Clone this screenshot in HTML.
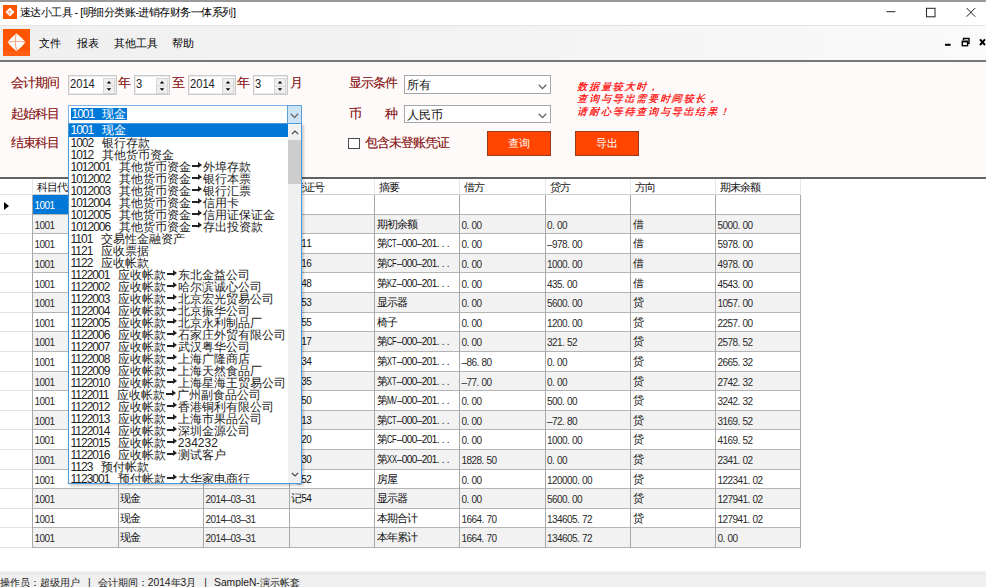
<!DOCTYPE html>
<html><head><meta charset="utf-8">
<style>
*{margin:0;padding:0;box-sizing:border-box}
html,body{width:986px;height:587px;overflow:hidden;background:#fff;font-family:"Liberation Sans",sans-serif;position:relative}
.abs{position:absolute}
#topline{position:absolute;left:0;top:0;width:986px;height:2px;background:#9a9a9a}
#title{position:absolute;left:0;top:2px;width:986px;height:23px;background:#fff}
#title .t{position:absolute;left:19.5px;top:3px;font-size:11px;letter-spacing:-0.5px;color:#000;white-space:nowrap}
#menubar{position:absolute;left:0;top:25px;width:986px;height:35px;background:linear-gradient(to right,#f0f0f0 0%,#f3f3f3 50%,#fafafa 100%);border-top:1px solid #e4e4e4}
.m{position:absolute;top:36px;font-size:11px;color:#000;white-space:nowrap}
#line1{position:absolute;left:0;top:59.6px;width:986px;height:2px;background:#777777}
#form{position:absolute;left:0;top:62px;width:986px;height:114.5px;background:#fefaf9}
#line2{position:absolute;left:0;top:177px;width:986px;height:2px;background:#626262}
.lab{position:absolute;font-size:13px;color:#8e2424;white-space:nowrap;line-height:15px;letter-spacing:-1px;text-shadow:0.2px 0 0 rgba(142,36,36,.6)}
.spin{position:absolute;height:20px;background:#fff;border:1px solid #c9c9c9;box-shadow:inset 0 0 0 1px #ececec}
.spin .v{position:absolute;left:0.5px;top:1px;font-size:12px;line-height:15px;color:#222;transform:scaleX(0.93);transform-origin:0 0}
.spin .sb{position:absolute;right:1px;top:1.5px}
.combo{position:absolute;background:#fff;border:1px solid #a6a6a6}
.combo .v{position:absolute;left:1.5px;top:2px;font-size:12px;line-height:14px;color:#111;white-space:pre}
.chev{position:absolute;right:3px}
.btn{position:absolute;background:#ff4500;border:1px solid #9a3a1c;color:#fff;font-size:11px;text-align:center}
#grid{position:absolute;left:0;top:179px;width:986px;height:394px;background:#fff}
.hc{position:absolute;top:179px;height:15px;font-size:11px;line-height:17px;padding-left:3.5px;letter-spacing:-1px;color:#111;white-space:nowrap;overflow:hidden}
.vl{position:absolute;width:1px;background:#a8a8a8}
.row{position:absolute;width:768px}
.hl{position:absolute;left:0;width:801px;height:1px;background:#b4b4b4}
.c{position:absolute;font-size:11px;padding-left:1.5px;color:#111;white-space:nowrap;overflow:hidden;letter-spacing:-0.8px}
.num{font-size:10px;letter-spacing:0;padding-left:1.5px;color:#2a2a2a}
.lat{font-size:10px;letter-spacing:0}
.c i{font-style:normal;display:inline-block;width:5px;text-align:left}
.c i.w{transform:scaleX(0.75);transform-origin:0 0}
.arrow{position:absolute;left:4px;width:0;height:0;border-left:5px solid #000;border-top:4px solid transparent;border-bottom:4px solid transparent}
#status{position:absolute;left:0;top:571px;width:986px;height:16px;background:linear-gradient(#f6f6f6 0,#e8e8e8 2.5px,#efefef 4px,#f0f0f0 100%)}
#status .t{position:absolute;left:0;top:5px;font-size:10.3px;color:#000;white-space:pre;color:#1a1a1a}
#status .sep{display:inline-block;margin:0 7px 0 8px}
#list{position:absolute;left:68px;top:123px;width:234px;height:361px;background:#fff;border:1px solid #4a98dc;box-shadow:2px 2px 2px rgba(0,0,0,.18);overflow:hidden}
#list .it{height:12px;line-height:12px;font-size:12px;padding-left:1.5px;white-space:pre;color:#222;width:219px;position:relative}
#list .sel{background:#0078d7;color:#fff;height:13px;line-height:13px}
#list .code{display:inline-block;letter-spacing:-1px}
#list .nm{margin-left:8.5px}
.ar{display:inline-block;width:12px;height:9px;vertical-align:0px;position:relative}
.ar:before{content:"";position:absolute;left:1px;top:2.5px;width:7px;height:2px;background:currentColor}
.ar:after{content:"";position:absolute;left:7px;top:0.3px;width:0;height:0;border-left:4.5px solid currentColor;border-top:3.2px solid transparent;border-bottom:3.2px solid transparent}
#sbar{position:absolute;left:218.5px;top:1px;width:14px;height:358px;background:#f0f0f0}
#thumb{position:absolute;left:0.5px;top:15px;width:13px;height:44px;background:#cdcdcd}
.sbchev{position:absolute;left:3px}
.red{position:absolute;left:576px;font-size:10px;line-height:12px;color:#ff1a1a;font-weight:normal;text-shadow:0.4px 0 0 #ff1a1a;white-space:nowrap;transform:skewX(-18deg);transform-origin:0 100%;letter-spacing:1.8px}
</style></head><body>
<div id="topline"></div>
<div id="title">
 <div class="t">速达小工具 - [明细分类账-进销存财务一体系列]</div>
</div>
<svg width="14" height="14" viewBox="0 0 14 14" style="position:absolute;left:3px;top:5px">
<rect width="14" height="14" fill="#ff5500"/>
<path d="M7 2.5 L11.5 7 L7 11.5 L2.5 7Z" fill="#fff"/>
<path d="M5 6.8 L8.5 6.2 M6.5 6.5 L6.8 10" fill="none" stroke="#f7a27a" stroke-width="1"/>
</svg>
<svg class="abs" style="left:880px;top:2px" width="106" height="23" viewBox="0 0 106 23">
 <path d="M6.5 9.7 H15.3" stroke="#222" stroke-width="1"/>
 <rect x="46.5" y="6.3" width="8.5" height="8.5" fill="none" stroke="#222" stroke-width="1"/>
 <path d="M86.6 6 L95.2 14.7 M95.2 6 L86.6 14.7" stroke="#222" stroke-width="1"/>
</svg>
<div id="menubar"></div>
<svg width="27" height="27" viewBox="0 0 27 27" style="position:absolute;left:3px;top:29px">
<rect width="27" height="27" fill="#ff5500"/>
<rect y="22" width="27" height="5" fill="#ff5e14"/>
<path d="M13.5 4.2 Q18.6 8.4 22.5 13.2 Q18.6 18 13.5 22.3 Q8.4 18 4.5 13.2 Q8.4 8.4 13.5 4.2Z" fill="#fff"/>
<path d="M5.2 13.3 Q13.5 11.4 21.8 13.1" fill="none" stroke="#f7a57c" stroke-width="1.1"/>
<path d="M13.2 4.8 Q10.9 13.4 13.9 21.6" fill="none" stroke="#f7a57c" stroke-width="1.1"/>
</svg>
<div class="m" style="left:39px">文件</div>
<div class="m" style="left:77px">报表</div>
<div class="m" style="left:114px">其他工具</div>
<div class="m" style="left:172px">帮助</div>
<svg class="abs" style="left:940px;top:34px" width="46" height="16" viewBox="0 0 46 16">
 <rect x="5" y="9.8" width="5.6" height="2" fill="#000"/>
 <path d="M23.5 6.2 V4.5 H29 V9.2 H27.6" fill="none" stroke="#000" stroke-width="1.4"/>
 <rect x="22.3" y="7.3" width="5.3" height="4.4" fill="none" stroke="#000" stroke-width="1.4"/>
 <rect x="22.3" y="6.8" width="5.3" height="1.6" fill="#000"/>
 <path d="M40 5.3 L45 11 M45 5.3 L40 11" stroke="#000" stroke-width="1.9"/>
</svg>
<div id="line1"></div>
<div id="form"></div>
<div class="lab" style="left:11px;top:75px">会计期间</div>
<div class="spin" style="left:68px;top:75px;width:49px"><div class="v">2014</div><svg class="sb" width="12" height="16" viewBox="0 0 12 16"><rect x="0" y="0" width="12" height="16" fill="#d6d6d6"/><rect x="1" y="1" width="10" height="6.5" fill="#efefef"/><rect x="1" y="8.5" width="10" height="6.5" fill="#efefef"/><path d="M3.8 5.6 L6 3 L8.2 5.6Z" fill="#000"/><path d="M3.8 10.2 L6 12.8 L8.2 10.2Z" fill="#000"/></svg></div>
<div class="lab" style="left:118px;top:75px">年</div>
<div class="spin" style="left:134px;top:75px;width:36px"><div class="v">3</div><svg class="sb" width="12" height="16" viewBox="0 0 12 16"><rect x="0" y="0" width="12" height="16" fill="#d6d6d6"/><rect x="1" y="1" width="10" height="6.5" fill="#efefef"/><rect x="1" y="8.5" width="10" height="6.5" fill="#efefef"/><path d="M3.8 5.6 L6 3 L8.2 5.6Z" fill="#000"/><path d="M3.8 10.2 L6 12.8 L8.2 10.2Z" fill="#000"/></svg></div>
<div class="lab" style="left:172px;top:75px">至</div>
<div class="spin" style="left:188px;top:75px;width:48px"><div class="v">2014</div><svg class="sb" width="12" height="16" viewBox="0 0 12 16"><rect x="0" y="0" width="12" height="16" fill="#d6d6d6"/><rect x="1" y="1" width="10" height="6.5" fill="#efefef"/><rect x="1" y="8.5" width="10" height="6.5" fill="#efefef"/><path d="M3.8 5.6 L6 3 L8.2 5.6Z" fill="#000"/><path d="M3.8 10.2 L6 12.8 L8.2 10.2Z" fill="#000"/></svg></div>
<div class="lab" style="left:237px;top:75px">年</div>
<div class="spin" style="left:253px;top:75px;width:35px"><div class="v">3</div><svg class="sb" width="12" height="16" viewBox="0 0 12 16"><rect x="0" y="0" width="12" height="16" fill="#d6d6d6"/><rect x="1" y="1" width="10" height="6.5" fill="#efefef"/><rect x="1" y="8.5" width="10" height="6.5" fill="#efefef"/><path d="M3.8 5.6 L6 3 L8.2 5.6Z" fill="#000"/><path d="M3.8 10.2 L6 12.8 L8.2 10.2Z" fill="#000"/></svg></div>
<div class="lab" style="left:290px;top:75px">月</div>
<div class="lab" style="left:11px;top:106px">起始科目</div>
<div class="lab" style="left:11px;top:134.5px">结束科目</div>
<div class="combo" style="left:68px;top:105px;width:234px;height:19px;border-color:#7db3e8"><div class="v" style="background:#0078d7;color:#fff;left:2px;top:2.3px;height:12px;line-height:12px;padding:0 1px 0 0.5px"><span style="letter-spacing:-1px">1001</span><span style="margin-left:7.5px">现金</span></div>
 <div class="abs" style="left:218px;top:-1px;width:15px;height:19px;background:#cce4f7;border:1px solid #5b9fd8"></div>
 <svg class="abs" style="left:220.5px;top:7px" width="9" height="6" viewBox="0 0 9 6"><path d="M0.8 0.8 L4.5 4.5 L8.2 0.8" fill="none" stroke="#6a6a6a" stroke-width="1.3"/></svg>
</div>
<div class="lab" style="left:349px;top:75px">显示条件</div>
<div class="combo" style="left:404px;top:74.5px;width:147px;height:19px"><div class="v">所有</div><svg class="chev" style="top:8px" width="9" height="6" viewBox="0 0 9 6"><path d="M0.8 0.8 L4.5 4.6 L8.2 0.8" fill="none" stroke="#606060" stroke-width="1.3"/></svg></div>
<div class="lab" style="left:349px;top:106px">币</div>
<div class="lab" style="left:385px;top:106px">种</div>
<div class="combo" style="left:404px;top:105px;width:147px;height:18px"><div class="v">人民币</div><svg class="chev" style="top:7px" width="9" height="6" viewBox="0 0 9 6"><path d="M0.8 0.8 L4.5 4.6 L8.2 0.8" fill="none" stroke="#606060" stroke-width="1.3"/></svg></div>
<div class="abs" style="left:348px;top:138px;width:11.5px;height:11px;border:1px solid #4a4a4a;background:#fff"></div>
<div class="lab" style="left:365px;top:135px">包含未登账凭证</div>
<div class="btn" style="left:487px;top:131px;width:63.5px;height:24.5px;line-height:22px">查询</div>
<div class="btn" style="left:575px;top:131px;width:63.5px;height:24.5px;line-height:22px">导出</div>
<div class="red" style="top:80.5px">数据量较大时，</div>
<div class="red" style="top:93px">查询与导出需要时间较长，</div>
<div class="red" style="top:105.5px">请耐心等待查询与导出结果！</div>
<div id="line2"></div>
<div id="grid"></div>
<div class="hc" style="left:33.5px;width:84.5px">科目代码</div>
<div class="hc" style="left:119.0px;width:84.5px">科目名称</div>
<div class="hc" style="left:204.5px;width:84.5px">日期</div>
<div class="hc" style="left:290.0px;width:84.5px">凭证号</div>
<div class="hc" style="left:375.5px;width:84.0px">摘要</div>
<div class="hc" style="left:460.5px;width:84.5px">借方</div>
<div class="hc" style="left:546.0px;width:84.5px">贷方</div>
<div class="hc" style="left:631.5px;width:84.0px">方向</div>
<div class="hc" style="left:716.5px;width:84.0px">期末余额</div>
<div class="row" style="left:32.5px;top:194.60px;height:19.61px;background:#ffffff"></div>
<div class="row" style="left:32.5px;top:214.21px;height:19.61px;background:#f2f2f2"></div>
<div class="row" style="left:32.5px;top:233.82px;height:19.61px;background:#ffffff"></div>
<div class="row" style="left:32.5px;top:253.43px;height:19.61px;background:#f2f2f2"></div>
<div class="row" style="left:32.5px;top:273.04px;height:19.61px;background:#ffffff"></div>
<div class="row" style="left:32.5px;top:292.66px;height:19.61px;background:#f2f2f2"></div>
<div class="row" style="left:32.5px;top:312.27px;height:19.61px;background:#ffffff"></div>
<div class="row" style="left:32.5px;top:331.88px;height:19.61px;background:#f2f2f2"></div>
<div class="row" style="left:32.5px;top:351.49px;height:19.61px;background:#ffffff"></div>
<div class="row" style="left:32.5px;top:371.10px;height:19.61px;background:#f2f2f2"></div>
<div class="row" style="left:32.5px;top:390.71px;height:19.61px;background:#ffffff"></div>
<div class="row" style="left:32.5px;top:410.32px;height:19.61px;background:#f2f2f2"></div>
<div class="row" style="left:32.5px;top:429.93px;height:19.61px;background:#ffffff"></div>
<div class="row" style="left:32.5px;top:449.54px;height:19.61px;background:#f2f2f2"></div>
<div class="row" style="left:32.5px;top:469.16px;height:19.61px;background:#ffffff"></div>
<div class="row" style="left:32.5px;top:488.77px;height:19.61px;background:#f2f2f2"></div>
<div class="row" style="left:32.5px;top:508.38px;height:19.61px;background:#ffffff"></div>
<div class="row" style="left:32.5px;top:527.99px;height:19.61px;background:#f2f2f2"></div>
<div class="hl" style="top:194.00px;background:#cccccc"></div>
<div class="hl" style="top:194.00px;width:32px;background:#e2e2e2"></div>
<div class="hl" style="top:213.61px"></div>
<div class="hl" style="top:213.61px;width:32px;background:#e2e2e2"></div>
<div class="hl" style="top:233.22px"></div>
<div class="hl" style="top:233.22px;width:32px;background:#e2e2e2"></div>
<div class="hl" style="top:252.83px"></div>
<div class="hl" style="top:252.83px;width:32px;background:#e2e2e2"></div>
<div class="hl" style="top:272.44px"></div>
<div class="hl" style="top:272.44px;width:32px;background:#e2e2e2"></div>
<div class="hl" style="top:292.06px"></div>
<div class="hl" style="top:292.06px;width:32px;background:#e2e2e2"></div>
<div class="hl" style="top:311.67px"></div>
<div class="hl" style="top:311.67px;width:32px;background:#e2e2e2"></div>
<div class="hl" style="top:331.28px"></div>
<div class="hl" style="top:331.28px;width:32px;background:#e2e2e2"></div>
<div class="hl" style="top:350.89px"></div>
<div class="hl" style="top:350.89px;width:32px;background:#e2e2e2"></div>
<div class="hl" style="top:370.50px"></div>
<div class="hl" style="top:370.50px;width:32px;background:#e2e2e2"></div>
<div class="hl" style="top:390.11px"></div>
<div class="hl" style="top:390.11px;width:32px;background:#e2e2e2"></div>
<div class="hl" style="top:409.72px"></div>
<div class="hl" style="top:409.72px;width:32px;background:#e2e2e2"></div>
<div class="hl" style="top:429.33px"></div>
<div class="hl" style="top:429.33px;width:32px;background:#e2e2e2"></div>
<div class="hl" style="top:448.94px"></div>
<div class="hl" style="top:448.94px;width:32px;background:#e2e2e2"></div>
<div class="hl" style="top:468.56px"></div>
<div class="hl" style="top:468.56px;width:32px;background:#e2e2e2"></div>
<div class="hl" style="top:488.17px"></div>
<div class="hl" style="top:488.17px;width:32px;background:#e2e2e2"></div>
<div class="hl" style="top:507.78px"></div>
<div class="hl" style="top:507.78px;width:32px;background:#e2e2e2"></div>
<div class="hl" style="top:527.39px"></div>
<div class="hl" style="top:527.39px;width:32px;background:#e2e2e2"></div>
<div class="hl" style="top:547.00px"></div>
<div class="hl" style="top:547.00px;width:32px;background:#e2e2e2"></div>
<div class="vl" style="left:32.0px;top:194.6px;height:353.0px"></div>
<div class="vl" style="left:32.0px;top:179px;height:15.6px;background:#e6e6e6"></div>
<div class="vl" style="left:117.5px;top:194.6px;height:353.0px"></div>
<div class="vl" style="left:117.5px;top:179px;height:15.6px;background:#e6e6e6"></div>
<div class="vl" style="left:203.0px;top:194.6px;height:353.0px"></div>
<div class="vl" style="left:203.0px;top:179px;height:15.6px;background:#e6e6e6"></div>
<div class="vl" style="left:288.5px;top:194.6px;height:353.0px"></div>
<div class="vl" style="left:288.5px;top:179px;height:15.6px;background:#e6e6e6"></div>
<div class="vl" style="left:374.0px;top:194.6px;height:353.0px"></div>
<div class="vl" style="left:374.0px;top:179px;height:15.6px;background:#e6e6e6"></div>
<div class="vl" style="left:459.0px;top:194.6px;height:353.0px"></div>
<div class="vl" style="left:459.0px;top:179px;height:15.6px;background:#e6e6e6"></div>
<div class="vl" style="left:544.5px;top:194.6px;height:353.0px"></div>
<div class="vl" style="left:544.5px;top:179px;height:15.6px;background:#e6e6e6"></div>
<div class="vl" style="left:630.0px;top:194.6px;height:353.0px"></div>
<div class="vl" style="left:630.0px;top:179px;height:15.6px;background:#e6e6e6"></div>
<div class="vl" style="left:715.0px;top:194.6px;height:353.0px"></div>
<div class="vl" style="left:715.0px;top:179px;height:15.6px;background:#e6e6e6"></div>
<div class="vl" style="left:800.0px;top:194.6px;height:353.0px"></div>
<div class="vl" style="left:800.0px;top:179px;height:15.6px;background:#e6e6e6"></div>
<div class="c num" style="left:33.0px;top:195.10px;width:84.5px;height:18.61px;line-height:21.11px;background:#0078d7;color:#fff;"><i>1</i><i>0</i><i>0</i><i>1</i></div>
<div class="c num" style="left:33.0px;top:214.71px;width:84.5px;height:18.61px;line-height:21.11px;"><i>1</i><i>0</i><i>0</i><i>1</i></div>
<div class="c" style="left:118.5px;top:214.71px;width:84.5px;height:18.61px;line-height:19.91px;">现金</div>
<div class="c num" style="left:204.0px;top:214.71px;width:84.5px;height:18.61px;line-height:21.11px;"><i>2</i><i>0</i><i>1</i><i>4</i><i>–</i><i>0</i><i>3</i><i>–</i><i>0</i><i>1</i></div>
<div class="c" style="left:375.0px;top:214.71px;width:84.0px;height:18.61px;line-height:19.91px;">期初余额</div>
<div class="c num" style="left:460.0px;top:214.71px;width:84.5px;height:18.61px;line-height:21.11px;"><i>0</i><i>.</i><i>0</i><i>0</i></div>
<div class="c num" style="left:545.5px;top:214.71px;width:84.5px;height:18.61px;line-height:21.11px;"><i>0</i><i>.</i><i>0</i><i>0</i></div>
<div class="c" style="left:631.0px;top:214.71px;width:84.0px;height:18.61px;line-height:19.91px;">借</div>
<div class="c num" style="left:716.0px;top:214.71px;width:84.0px;height:18.61px;line-height:21.11px;"><i>5</i><i>0</i><i>0</i><i>0</i><i>.</i><i>0</i><i>0</i></div>
<div class="c num" style="left:33.0px;top:234.32px;width:84.5px;height:18.61px;line-height:21.11px;"><i>1</i><i>0</i><i>0</i><i>1</i></div>
<div class="c" style="left:118.5px;top:234.32px;width:84.5px;height:18.61px;line-height:19.91px;">现金</div>
<div class="c num" style="left:204.0px;top:234.32px;width:84.5px;height:18.61px;line-height:21.11px;"><i>2</i><i>0</i><i>1</i><i>4</i><i>–</i><i>0</i><i>3</i><i>–</i><i>0</i><i>1</i></div>
<div class="c" style="left:289.5px;top:234.32px;width:84.5px;height:18.61px;line-height:19.91px;">记<span class="lat"><i>1</i><i>1</i></span></div>
<div class="c" style="left:375.0px;top:234.32px;width:84.0px;height:18.61px;line-height:19.91px;">第<span class="lat"><i class="w">C</i><i class="w">T</i><i>–</i><i>0</i><i>0</i><i>0</i><i>–</i><i>2</i><i>0</i><i>1</i><i>.</i><i>.</i><i>.</i></span></div>
<div class="c num" style="left:460.0px;top:234.32px;width:84.5px;height:18.61px;line-height:21.11px;"><i>0</i><i>.</i><i>0</i><i>0</i></div>
<div class="c num" style="left:545.5px;top:234.32px;width:84.5px;height:18.61px;line-height:21.11px;"><i>–</i><i>9</i><i>7</i><i>8</i><i>.</i><i>0</i><i>0</i></div>
<div class="c" style="left:631.0px;top:234.32px;width:84.0px;height:18.61px;line-height:19.91px;">借</div>
<div class="c num" style="left:716.0px;top:234.32px;width:84.0px;height:18.61px;line-height:21.11px;"><i>5</i><i>9</i><i>7</i><i>8</i><i>.</i><i>0</i><i>0</i></div>
<div class="c num" style="left:33.0px;top:253.93px;width:84.5px;height:18.61px;line-height:21.11px;"><i>1</i><i>0</i><i>0</i><i>1</i></div>
<div class="c" style="left:118.5px;top:253.93px;width:84.5px;height:18.61px;line-height:19.91px;">现金</div>
<div class="c num" style="left:204.0px;top:253.93px;width:84.5px;height:18.61px;line-height:21.11px;"><i>2</i><i>0</i><i>1</i><i>4</i><i>–</i><i>0</i><i>3</i><i>–</i><i>0</i><i>1</i></div>
<div class="c" style="left:289.5px;top:253.93px;width:84.5px;height:18.61px;line-height:19.91px;">记<span class="lat"><i>1</i><i>6</i></span></div>
<div class="c" style="left:375.0px;top:253.93px;width:84.0px;height:18.61px;line-height:19.91px;">第<span class="lat"><i class="w">C</i><i class="w">F</i><i>–</i><i>0</i><i>0</i><i>0</i><i>–</i><i>2</i><i>0</i><i>1</i><i>.</i><i>.</i><i>.</i></span></div>
<div class="c num" style="left:460.0px;top:253.93px;width:84.5px;height:18.61px;line-height:21.11px;"><i>0</i><i>.</i><i>0</i><i>0</i></div>
<div class="c num" style="left:545.5px;top:253.93px;width:84.5px;height:18.61px;line-height:21.11px;"><i>1</i><i>0</i><i>0</i><i>0</i><i>.</i><i>0</i><i>0</i></div>
<div class="c" style="left:631.0px;top:253.93px;width:84.0px;height:18.61px;line-height:19.91px;">借</div>
<div class="c num" style="left:716.0px;top:253.93px;width:84.0px;height:18.61px;line-height:21.11px;"><i>4</i><i>9</i><i>7</i><i>8</i><i>.</i><i>0</i><i>0</i></div>
<div class="c num" style="left:33.0px;top:273.54px;width:84.5px;height:18.61px;line-height:21.11px;"><i>1</i><i>0</i><i>0</i><i>1</i></div>
<div class="c" style="left:118.5px;top:273.54px;width:84.5px;height:18.61px;line-height:19.91px;">现金</div>
<div class="c num" style="left:204.0px;top:273.54px;width:84.5px;height:18.61px;line-height:21.11px;"><i>2</i><i>0</i><i>1</i><i>4</i><i>–</i><i>0</i><i>3</i><i>–</i><i>0</i><i>1</i></div>
<div class="c" style="left:289.5px;top:273.54px;width:84.5px;height:18.61px;line-height:19.91px;">记<span class="lat"><i>4</i><i>8</i></span></div>
<div class="c" style="left:375.0px;top:273.54px;width:84.0px;height:18.61px;line-height:19.91px;">第<span class="lat"><i class="w">K</i><i class="w">Z</i><i>–</i><i>0</i><i>0</i><i>0</i><i>–</i><i>2</i><i>0</i><i>1</i><i>.</i><i>.</i><i>.</i></span></div>
<div class="c num" style="left:460.0px;top:273.54px;width:84.5px;height:18.61px;line-height:21.11px;"><i>0</i><i>.</i><i>0</i><i>0</i></div>
<div class="c num" style="left:545.5px;top:273.54px;width:84.5px;height:18.61px;line-height:21.11px;"><i>4</i><i>3</i><i>5</i><i>.</i><i>0</i><i>0</i></div>
<div class="c" style="left:631.0px;top:273.54px;width:84.0px;height:18.61px;line-height:19.91px;">借</div>
<div class="c num" style="left:716.0px;top:273.54px;width:84.0px;height:18.61px;line-height:21.11px;"><i>4</i><i>5</i><i>4</i><i>3</i><i>.</i><i>0</i><i>0</i></div>
<div class="c num" style="left:33.0px;top:293.16px;width:84.5px;height:18.61px;line-height:21.11px;"><i>1</i><i>0</i><i>0</i><i>1</i></div>
<div class="c" style="left:118.5px;top:293.16px;width:84.5px;height:18.61px;line-height:19.91px;">现金</div>
<div class="c num" style="left:204.0px;top:293.16px;width:84.5px;height:18.61px;line-height:21.11px;"><i>2</i><i>0</i><i>1</i><i>4</i><i>–</i><i>0</i><i>3</i><i>–</i><i>0</i><i>1</i></div>
<div class="c" style="left:289.5px;top:293.16px;width:84.5px;height:18.61px;line-height:19.91px;">记<span class="lat"><i>5</i><i>3</i></span></div>
<div class="c" style="left:375.0px;top:293.16px;width:84.0px;height:18.61px;line-height:19.91px;">显示器</div>
<div class="c num" style="left:460.0px;top:293.16px;width:84.5px;height:18.61px;line-height:21.11px;"><i>0</i><i>.</i><i>0</i><i>0</i></div>
<div class="c num" style="left:545.5px;top:293.16px;width:84.5px;height:18.61px;line-height:21.11px;"><i>5</i><i>6</i><i>0</i><i>0</i><i>.</i><i>0</i><i>0</i></div>
<div class="c" style="left:631.0px;top:293.16px;width:84.0px;height:18.61px;line-height:19.91px;">贷</div>
<div class="c num" style="left:716.0px;top:293.16px;width:84.0px;height:18.61px;line-height:21.11px;"><i>1</i><i>0</i><i>5</i><i>7</i><i>.</i><i>0</i><i>0</i></div>
<div class="c num" style="left:33.0px;top:312.77px;width:84.5px;height:18.61px;line-height:21.11px;"><i>1</i><i>0</i><i>0</i><i>1</i></div>
<div class="c" style="left:118.5px;top:312.77px;width:84.5px;height:18.61px;line-height:19.91px;">现金</div>
<div class="c num" style="left:204.0px;top:312.77px;width:84.5px;height:18.61px;line-height:21.11px;"><i>2</i><i>0</i><i>1</i><i>4</i><i>–</i><i>0</i><i>3</i><i>–</i><i>0</i><i>1</i></div>
<div class="c" style="left:289.5px;top:312.77px;width:84.5px;height:18.61px;line-height:19.91px;">记<span class="lat"><i>5</i><i>5</i></span></div>
<div class="c" style="left:375.0px;top:312.77px;width:84.0px;height:18.61px;line-height:19.91px;">椅子</div>
<div class="c num" style="left:460.0px;top:312.77px;width:84.5px;height:18.61px;line-height:21.11px;"><i>0</i><i>.</i><i>0</i><i>0</i></div>
<div class="c num" style="left:545.5px;top:312.77px;width:84.5px;height:18.61px;line-height:21.11px;"><i>1</i><i>2</i><i>0</i><i>0</i><i>.</i><i>0</i><i>0</i></div>
<div class="c" style="left:631.0px;top:312.77px;width:84.0px;height:18.61px;line-height:19.91px;">贷</div>
<div class="c num" style="left:716.0px;top:312.77px;width:84.0px;height:18.61px;line-height:21.11px;"><i>2</i><i>2</i><i>5</i><i>7</i><i>.</i><i>0</i><i>0</i></div>
<div class="c num" style="left:33.0px;top:332.38px;width:84.5px;height:18.61px;line-height:21.11px;"><i>1</i><i>0</i><i>0</i><i>1</i></div>
<div class="c" style="left:118.5px;top:332.38px;width:84.5px;height:18.61px;line-height:19.91px;">现金</div>
<div class="c num" style="left:204.0px;top:332.38px;width:84.5px;height:18.61px;line-height:21.11px;"><i>2</i><i>0</i><i>1</i><i>4</i><i>–</i><i>0</i><i>3</i><i>–</i><i>0</i><i>1</i></div>
<div class="c" style="left:289.5px;top:332.38px;width:84.5px;height:18.61px;line-height:19.91px;">记<span class="lat"><i>1</i><i>7</i></span></div>
<div class="c" style="left:375.0px;top:332.38px;width:84.0px;height:18.61px;line-height:19.91px;">第<span class="lat"><i class="w">C</i><i class="w">F</i><i>–</i><i>0</i><i>0</i><i>0</i><i>–</i><i>2</i><i>0</i><i>1</i><i>.</i><i>.</i><i>.</i></span></div>
<div class="c num" style="left:460.0px;top:332.38px;width:84.5px;height:18.61px;line-height:21.11px;"><i>0</i><i>.</i><i>0</i><i>0</i></div>
<div class="c num" style="left:545.5px;top:332.38px;width:84.5px;height:18.61px;line-height:21.11px;"><i>3</i><i>2</i><i>1</i><i>.</i><i>5</i><i>2</i></div>
<div class="c" style="left:631.0px;top:332.38px;width:84.0px;height:18.61px;line-height:19.91px;">贷</div>
<div class="c num" style="left:716.0px;top:332.38px;width:84.0px;height:18.61px;line-height:21.11px;"><i>2</i><i>5</i><i>7</i><i>8</i><i>.</i><i>5</i><i>2</i></div>
<div class="c num" style="left:33.0px;top:351.99px;width:84.5px;height:18.61px;line-height:21.11px;"><i>1</i><i>0</i><i>0</i><i>1</i></div>
<div class="c" style="left:118.5px;top:351.99px;width:84.5px;height:18.61px;line-height:19.91px;">现金</div>
<div class="c num" style="left:204.0px;top:351.99px;width:84.5px;height:18.61px;line-height:21.11px;"><i>2</i><i>0</i><i>1</i><i>4</i><i>–</i><i>0</i><i>3</i><i>–</i><i>0</i><i>1</i></div>
<div class="c" style="left:289.5px;top:351.99px;width:84.5px;height:18.61px;line-height:19.91px;">记<span class="lat"><i>3</i><i>4</i></span></div>
<div class="c" style="left:375.0px;top:351.99px;width:84.0px;height:18.61px;line-height:19.91px;">第<span class="lat"><i class="w">X</i><i class="w">T</i><i>–</i><i>0</i><i>0</i><i>0</i><i>–</i><i>2</i><i>0</i><i>1</i><i>.</i><i>.</i><i>.</i></span></div>
<div class="c num" style="left:460.0px;top:351.99px;width:84.5px;height:18.61px;line-height:21.11px;"><i>–</i><i>8</i><i>6</i><i>.</i><i>8</i><i>0</i></div>
<div class="c num" style="left:545.5px;top:351.99px;width:84.5px;height:18.61px;line-height:21.11px;"><i>0</i><i>.</i><i>0</i><i>0</i></div>
<div class="c" style="left:631.0px;top:351.99px;width:84.0px;height:18.61px;line-height:19.91px;">贷</div>
<div class="c num" style="left:716.0px;top:351.99px;width:84.0px;height:18.61px;line-height:21.11px;"><i>2</i><i>6</i><i>6</i><i>5</i><i>.</i><i>3</i><i>2</i></div>
<div class="c num" style="left:33.0px;top:371.60px;width:84.5px;height:18.61px;line-height:21.11px;"><i>1</i><i>0</i><i>0</i><i>1</i></div>
<div class="c" style="left:118.5px;top:371.60px;width:84.5px;height:18.61px;line-height:19.91px;">现金</div>
<div class="c num" style="left:204.0px;top:371.60px;width:84.5px;height:18.61px;line-height:21.11px;"><i>2</i><i>0</i><i>1</i><i>4</i><i>–</i><i>0</i><i>3</i><i>–</i><i>0</i><i>1</i></div>
<div class="c" style="left:289.5px;top:371.60px;width:84.5px;height:18.61px;line-height:19.91px;">记<span class="lat"><i>3</i><i>5</i></span></div>
<div class="c" style="left:375.0px;top:371.60px;width:84.0px;height:18.61px;line-height:19.91px;">第<span class="lat"><i class="w">X</i><i class="w">T</i><i>–</i><i>0</i><i>0</i><i>0</i><i>–</i><i>2</i><i>0</i><i>1</i><i>.</i><i>.</i><i>.</i></span></div>
<div class="c num" style="left:460.0px;top:371.60px;width:84.5px;height:18.61px;line-height:21.11px;"><i>–</i><i>7</i><i>7</i><i>.</i><i>0</i><i>0</i></div>
<div class="c num" style="left:545.5px;top:371.60px;width:84.5px;height:18.61px;line-height:21.11px;"><i>0</i><i>.</i><i>0</i><i>0</i></div>
<div class="c" style="left:631.0px;top:371.60px;width:84.0px;height:18.61px;line-height:19.91px;">贷</div>
<div class="c num" style="left:716.0px;top:371.60px;width:84.0px;height:18.61px;line-height:21.11px;"><i>2</i><i>7</i><i>4</i><i>2</i><i>.</i><i>3</i><i>2</i></div>
<div class="c num" style="left:33.0px;top:391.21px;width:84.5px;height:18.61px;line-height:21.11px;"><i>1</i><i>0</i><i>0</i><i>1</i></div>
<div class="c" style="left:118.5px;top:391.21px;width:84.5px;height:18.61px;line-height:19.91px;">现金</div>
<div class="c num" style="left:204.0px;top:391.21px;width:84.5px;height:18.61px;line-height:21.11px;"><i>2</i><i>0</i><i>1</i><i>4</i><i>–</i><i>0</i><i>3</i><i>–</i><i>0</i><i>1</i></div>
<div class="c" style="left:289.5px;top:391.21px;width:84.5px;height:18.61px;line-height:19.91px;">记<span class="lat"><i>5</i><i>0</i></span></div>
<div class="c" style="left:375.0px;top:391.21px;width:84.0px;height:18.61px;line-height:19.91px;">第<span class="lat"><i class="w">M</i><i class="w">V</i><i>–</i><i>0</i><i>0</i><i>0</i><i>–</i><i>2</i><i>0</i><i>1</i><i>.</i><i>.</i><i>.</i></span></div>
<div class="c num" style="left:460.0px;top:391.21px;width:84.5px;height:18.61px;line-height:21.11px;"><i>0</i><i>.</i><i>0</i><i>0</i></div>
<div class="c num" style="left:545.5px;top:391.21px;width:84.5px;height:18.61px;line-height:21.11px;"><i>5</i><i>0</i><i>0</i><i>.</i><i>0</i><i>0</i></div>
<div class="c" style="left:631.0px;top:391.21px;width:84.0px;height:18.61px;line-height:19.91px;">贷</div>
<div class="c num" style="left:716.0px;top:391.21px;width:84.0px;height:18.61px;line-height:21.11px;"><i>3</i><i>2</i><i>4</i><i>2</i><i>.</i><i>3</i><i>2</i></div>
<div class="c num" style="left:33.0px;top:410.82px;width:84.5px;height:18.61px;line-height:21.11px;"><i>1</i><i>0</i><i>0</i><i>1</i></div>
<div class="c" style="left:118.5px;top:410.82px;width:84.5px;height:18.61px;line-height:19.91px;">现金</div>
<div class="c num" style="left:204.0px;top:410.82px;width:84.5px;height:18.61px;line-height:21.11px;"><i>2</i><i>0</i><i>1</i><i>4</i><i>–</i><i>0</i><i>3</i><i>–</i><i>0</i><i>1</i></div>
<div class="c" style="left:289.5px;top:410.82px;width:84.5px;height:18.61px;line-height:19.91px;">记<span class="lat"><i>1</i><i>3</i></span></div>
<div class="c" style="left:375.0px;top:410.82px;width:84.0px;height:18.61px;line-height:19.91px;">第<span class="lat"><i class="w">C</i><i class="w">T</i><i>–</i><i>0</i><i>0</i><i>0</i><i>–</i><i>2</i><i>0</i><i>1</i><i>.</i><i>.</i><i>.</i></span></div>
<div class="c num" style="left:460.0px;top:410.82px;width:84.5px;height:18.61px;line-height:21.11px;"><i>0</i><i>.</i><i>0</i><i>0</i></div>
<div class="c num" style="left:545.5px;top:410.82px;width:84.5px;height:18.61px;line-height:21.11px;"><i>–</i><i>7</i><i>2</i><i>.</i><i>8</i><i>0</i></div>
<div class="c" style="left:631.0px;top:410.82px;width:84.0px;height:18.61px;line-height:19.91px;">贷</div>
<div class="c num" style="left:716.0px;top:410.82px;width:84.0px;height:18.61px;line-height:21.11px;"><i>3</i><i>1</i><i>6</i><i>9</i><i>.</i><i>5</i><i>2</i></div>
<div class="c num" style="left:33.0px;top:430.43px;width:84.5px;height:18.61px;line-height:21.11px;"><i>1</i><i>0</i><i>0</i><i>1</i></div>
<div class="c" style="left:118.5px;top:430.43px;width:84.5px;height:18.61px;line-height:19.91px;">现金</div>
<div class="c num" style="left:204.0px;top:430.43px;width:84.5px;height:18.61px;line-height:21.11px;"><i>2</i><i>0</i><i>1</i><i>4</i><i>–</i><i>0</i><i>3</i><i>–</i><i>0</i><i>1</i></div>
<div class="c" style="left:289.5px;top:430.43px;width:84.5px;height:18.61px;line-height:19.91px;">记<span class="lat"><i>2</i><i>0</i></span></div>
<div class="c" style="left:375.0px;top:430.43px;width:84.0px;height:18.61px;line-height:19.91px;">第<span class="lat"><i class="w">C</i><i class="w">F</i><i>–</i><i>0</i><i>0</i><i>0</i><i>–</i><i>2</i><i>0</i><i>1</i><i>.</i><i>.</i><i>.</i></span></div>
<div class="c num" style="left:460.0px;top:430.43px;width:84.5px;height:18.61px;line-height:21.11px;"><i>0</i><i>.</i><i>0</i><i>0</i></div>
<div class="c num" style="left:545.5px;top:430.43px;width:84.5px;height:18.61px;line-height:21.11px;"><i>1</i><i>0</i><i>0</i><i>0</i><i>.</i><i>0</i><i>0</i></div>
<div class="c" style="left:631.0px;top:430.43px;width:84.0px;height:18.61px;line-height:19.91px;">贷</div>
<div class="c num" style="left:716.0px;top:430.43px;width:84.0px;height:18.61px;line-height:21.11px;"><i>4</i><i>1</i><i>6</i><i>9</i><i>.</i><i>5</i><i>2</i></div>
<div class="c num" style="left:33.0px;top:450.04px;width:84.5px;height:18.61px;line-height:21.11px;"><i>1</i><i>0</i><i>0</i><i>1</i></div>
<div class="c" style="left:118.5px;top:450.04px;width:84.5px;height:18.61px;line-height:19.91px;">现金</div>
<div class="c num" style="left:204.0px;top:450.04px;width:84.5px;height:18.61px;line-height:21.11px;"><i>2</i><i>0</i><i>1</i><i>4</i><i>–</i><i>0</i><i>3</i><i>–</i><i>0</i><i>1</i></div>
<div class="c" style="left:289.5px;top:450.04px;width:84.5px;height:18.61px;line-height:19.91px;">记<span class="lat"><i>3</i><i>0</i></span></div>
<div class="c" style="left:375.0px;top:450.04px;width:84.0px;height:18.61px;line-height:19.91px;">第<span class="lat"><i class="w">X</i><i class="w">X</i><i>–</i><i>0</i><i>0</i><i>0</i><i>–</i><i>2</i><i>0</i><i>1</i><i>.</i><i>.</i><i>.</i></span></div>
<div class="c num" style="left:460.0px;top:450.04px;width:84.5px;height:18.61px;line-height:21.11px;"><i>1</i><i>8</i><i>2</i><i>8</i><i>.</i><i>5</i><i>0</i></div>
<div class="c num" style="left:545.5px;top:450.04px;width:84.5px;height:18.61px;line-height:21.11px;"><i>0</i><i>.</i><i>0</i><i>0</i></div>
<div class="c" style="left:631.0px;top:450.04px;width:84.0px;height:18.61px;line-height:19.91px;">贷</div>
<div class="c num" style="left:716.0px;top:450.04px;width:84.0px;height:18.61px;line-height:21.11px;"><i>2</i><i>3</i><i>4</i><i>1</i><i>.</i><i>0</i><i>2</i></div>
<div class="c num" style="left:33.0px;top:469.66px;width:84.5px;height:18.61px;line-height:21.11px;"><i>1</i><i>0</i><i>0</i><i>1</i></div>
<div class="c" style="left:118.5px;top:469.66px;width:84.5px;height:18.61px;line-height:19.91px;">现金</div>
<div class="c num" style="left:204.0px;top:469.66px;width:84.5px;height:18.61px;line-height:21.11px;"><i>2</i><i>0</i><i>1</i><i>4</i><i>–</i><i>0</i><i>3</i><i>–</i><i>0</i><i>1</i></div>
<div class="c" style="left:289.5px;top:469.66px;width:84.5px;height:18.61px;line-height:19.91px;">记<span class="lat"><i>5</i><i>2</i></span></div>
<div class="c" style="left:375.0px;top:469.66px;width:84.0px;height:18.61px;line-height:19.91px;">房屋</div>
<div class="c num" style="left:460.0px;top:469.66px;width:84.5px;height:18.61px;line-height:21.11px;"><i>0</i><i>.</i><i>0</i><i>0</i></div>
<div class="c num" style="left:545.5px;top:469.66px;width:84.5px;height:18.61px;line-height:21.11px;"><i>1</i><i>2</i><i>0</i><i>0</i><i>0</i><i>0</i><i>.</i><i>0</i><i>0</i></div>
<div class="c" style="left:631.0px;top:469.66px;width:84.0px;height:18.61px;line-height:19.91px;">贷</div>
<div class="c num" style="left:716.0px;top:469.66px;width:84.0px;height:18.61px;line-height:21.11px;"><i>1</i><i>2</i><i>2</i><i>3</i><i>4</i><i>1</i><i>.</i><i>0</i><i>2</i></div>
<div class="c num" style="left:33.0px;top:489.27px;width:84.5px;height:18.61px;line-height:21.11px;"><i>1</i><i>0</i><i>0</i><i>1</i></div>
<div class="c" style="left:118.5px;top:489.27px;width:84.5px;height:18.61px;line-height:19.91px;">现金</div>
<div class="c num" style="left:204.0px;top:489.27px;width:84.5px;height:18.61px;line-height:21.11px;"><i>2</i><i>0</i><i>1</i><i>4</i><i>–</i><i>0</i><i>3</i><i>–</i><i>3</i><i>1</i></div>
<div class="c" style="left:289.5px;top:489.27px;width:84.5px;height:18.61px;line-height:19.91px;">记<span class="lat"><i>5</i><i>4</i></span></div>
<div class="c" style="left:375.0px;top:489.27px;width:84.0px;height:18.61px;line-height:19.91px;">显示器</div>
<div class="c num" style="left:460.0px;top:489.27px;width:84.5px;height:18.61px;line-height:21.11px;"><i>0</i><i>.</i><i>0</i><i>0</i></div>
<div class="c num" style="left:545.5px;top:489.27px;width:84.5px;height:18.61px;line-height:21.11px;"><i>5</i><i>6</i><i>0</i><i>0</i><i>.</i><i>0</i><i>0</i></div>
<div class="c" style="left:631.0px;top:489.27px;width:84.0px;height:18.61px;line-height:19.91px;">贷</div>
<div class="c num" style="left:716.0px;top:489.27px;width:84.0px;height:18.61px;line-height:21.11px;"><i>1</i><i>2</i><i>7</i><i>9</i><i>4</i><i>1</i><i>.</i><i>0</i><i>2</i></div>
<div class="c num" style="left:33.0px;top:508.88px;width:84.5px;height:18.61px;line-height:21.11px;"><i>1</i><i>0</i><i>0</i><i>1</i></div>
<div class="c" style="left:118.5px;top:508.88px;width:84.5px;height:18.61px;line-height:19.91px;">现金</div>
<div class="c num" style="left:204.0px;top:508.88px;width:84.5px;height:18.61px;line-height:21.11px;"><i>2</i><i>0</i><i>1</i><i>4</i><i>–</i><i>0</i><i>3</i><i>–</i><i>3</i><i>1</i></div>
<div class="c" style="left:375.0px;top:508.88px;width:84.0px;height:18.61px;line-height:19.91px;">本期合计</div>
<div class="c num" style="left:460.0px;top:508.88px;width:84.5px;height:18.61px;line-height:21.11px;"><i>1</i><i>6</i><i>6</i><i>4</i><i>.</i><i>7</i><i>0</i></div>
<div class="c num" style="left:545.5px;top:508.88px;width:84.5px;height:18.61px;line-height:21.11px;"><i>1</i><i>3</i><i>4</i><i>6</i><i>0</i><i>5</i><i>.</i><i>7</i><i>2</i></div>
<div class="c" style="left:631.0px;top:508.88px;width:84.0px;height:18.61px;line-height:19.91px;">贷</div>
<div class="c num" style="left:716.0px;top:508.88px;width:84.0px;height:18.61px;line-height:21.11px;"><i>1</i><i>2</i><i>7</i><i>9</i><i>4</i><i>1</i><i>.</i><i>0</i><i>2</i></div>
<div class="c num" style="left:33.0px;top:528.49px;width:84.5px;height:18.61px;line-height:21.11px;"><i>1</i><i>0</i><i>0</i><i>1</i></div>
<div class="c" style="left:118.5px;top:528.49px;width:84.5px;height:18.61px;line-height:19.91px;">现金</div>
<div class="c num" style="left:204.0px;top:528.49px;width:84.5px;height:18.61px;line-height:21.11px;"><i>2</i><i>0</i><i>1</i><i>4</i><i>–</i><i>0</i><i>3</i><i>–</i><i>3</i><i>1</i></div>
<div class="c" style="left:375.0px;top:528.49px;width:84.0px;height:18.61px;line-height:19.91px;">本年累计</div>
<div class="c num" style="left:460.0px;top:528.49px;width:84.5px;height:18.61px;line-height:21.11px;"><i>1</i><i>6</i><i>6</i><i>4</i><i>.</i><i>7</i><i>0</i></div>
<div class="c num" style="left:545.5px;top:528.49px;width:84.5px;height:18.61px;line-height:21.11px;"><i>1</i><i>3</i><i>4</i><i>6</i><i>0</i><i>5</i><i>.</i><i>7</i><i>2</i></div>
<div class="c num" style="left:716.0px;top:528.49px;width:84.0px;height:18.61px;line-height:21.11px;"><i>0</i><i>.</i><i>0</i><i>0</i></div>
<div class="arrow" style="top:202.2px"></div>
<div id="status"><div class="t">操作员：超级用户<span class="sep">|</span>会计期间：2014年3月<span class="sep">|</span>SampleN-演示帐套</div></div>
<div id="list">
<div class="it sel"><span class="code">1001</span><span class="nm">现金</span></div>
<div class="it"><span class="code">1002</span><span class="nm">银行存款</span></div>
<div class="it"><span class="code">1012</span><span class="nm">其他货币资金</span></div>
<div class="it"><span class="code">1012001</span><span class="nm">其他货币资金<span class="ar"></span>外埠存款</span></div>
<div class="it"><span class="code">1012002</span><span class="nm">其他货币资金<span class="ar"></span>银行本票</span></div>
<div class="it"><span class="code">1012003</span><span class="nm">其他货币资金<span class="ar"></span>银行汇票</span></div>
<div class="it"><span class="code">1012004</span><span class="nm">其他货币资金<span class="ar"></span>信用卡</span></div>
<div class="it"><span class="code">1012005</span><span class="nm">其他货币资金<span class="ar"></span>信用证保证金</span></div>
<div class="it"><span class="code">1012006</span><span class="nm">其他货币资金<span class="ar"></span>存出投资款</span></div>
<div class="it"><span class="code">1101</span><span class="nm">交易性金融资产</span></div>
<div class="it"><span class="code">1121</span><span class="nm">应收票据</span></div>
<div class="it"><span class="code">1122</span><span class="nm">应收帐款</span></div>
<div class="it"><span class="code">1122001</span><span class="nm">应收帐款<span class="ar"></span>东北金益公司</span></div>
<div class="it"><span class="code">1122002</span><span class="nm">应收帐款<span class="ar"></span>哈尔滨诚心公司</span></div>
<div class="it"><span class="code">1122003</span><span class="nm">应收帐款<span class="ar"></span>北京宏光贸易公司</span></div>
<div class="it"><span class="code">1122004</span><span class="nm">应收帐款<span class="ar"></span>北京振华公司</span></div>
<div class="it"><span class="code">1122005</span><span class="nm">应收帐款<span class="ar"></span>北京永利制品厂</span></div>
<div class="it"><span class="code">1122006</span><span class="nm">应收帐款<span class="ar"></span>石家庄外贸有限公司</span></div>
<div class="it"><span class="code">1122007</span><span class="nm">应收帐款<span class="ar"></span>武汉粤华公司</span></div>
<div class="it"><span class="code">1122008</span><span class="nm">应收帐款<span class="ar"></span>上海广隆商店</span></div>
<div class="it"><span class="code">1122009</span><span class="nm">应收帐款<span class="ar"></span>上海天然食品厂</span></div>
<div class="it"><span class="code">1122010</span><span class="nm">应收帐款<span class="ar"></span>上海星海王贸易公司</span></div>
<div class="it"><span class="code">1122011</span><span class="nm">应收帐款<span class="ar"></span>广州副食品公司</span></div>
<div class="it"><span class="code">1122012</span><span class="nm">应收帐款<span class="ar"></span>香港铜利有限公司</span></div>
<div class="it"><span class="code">1122013</span><span class="nm">应收帐款<span class="ar"></span>上海市果品公司</span></div>
<div class="it"><span class="code">1122014</span><span class="nm">应收帐款<span class="ar"></span>深圳金源公司</span></div>
<div class="it"><span class="code">1122015</span><span class="nm">应收帐款<span class="ar"></span>234232</span></div>
<div class="it"><span class="code">1122016</span><span class="nm">应收帐款<span class="ar"></span>测试客户</span></div>
<div class="it"><span class="code">1123</span><span class="nm">预付帐款</span></div>
<div class="it"><span class="code">1123001</span><span class="nm">预付帐款<span class="ar"></span>大华家电商行</span></div>
<div id="sbar"><div id="thumb"></div>
<svg class="sbchev" style="top:5px" width="8" height="5" viewBox="0 0 8 5"><path d="M0.8 4.2 L4 1 L7.2 4.2" fill="none" stroke="#444" stroke-width="1.2"/></svg>
<svg class="sbchev" style="top:347px" width="8" height="5" viewBox="0 0 8 5"><path d="M0.8 0.8 L4 4 L7.2 0.8" fill="none" stroke="#444" stroke-width="1.2"/></svg>
</div>
</div>
</body></html>
